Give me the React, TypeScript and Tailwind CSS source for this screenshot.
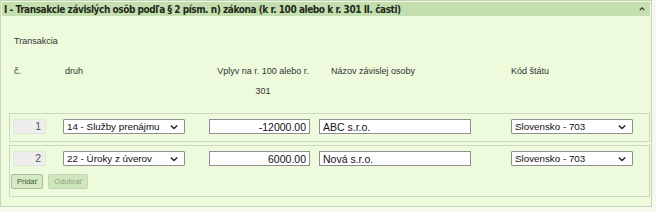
import { useState } from "react";

type Row = { id: number; druh: string; amount: string; name: string; country: string };

const druhOptions = ["14 - Služby prenájmu", "22 - Úroky z úverov"];
const countryOptions = ["Slovensko - 703"];

function Chevron() {
  return (
    <svg
      viewBox="0 0 10 6"
      className="pointer-events-none absolute right-[7px] top-1/2 h-[5px] w-[8px] -translate-y-1/2"
    >
      <path d="M1 1l4 4 4-4" fill="none" stroke="#222" strokeWidth="1.8" />
    </svg>
  );
}

function Select({ value, options, width }: { value: string; options: string[]; width: string }) {
  return (
    <div className={`relative text-[9.8px] leading-[13px] ${width}`}>
      <select
        defaultValue={value}
        className="block h-[15px] w-full appearance-none rounded-[1px] border border-[#8f8f8f] bg-white pl-[3px] leading-[13px] text-[#111] outline-none"
      >
        {options.map((o) => (
          <option key={o}>{o}</option>
        ))}
      </select>
      <Chevron />
    </div>
  );
}

function RowFields({ row }: { row: Row }) {
  return (
    <div className="flex h-[15px] items-center text-[10.5px] leading-[13px]">
      <div className="ml-[2px] flex h-[15px] w-[33px] items-center justify-end border border-[#e1e5dc] bg-[#eeeeee] pr-[4px] text-[#555]">
        {row.id}
      </div>
      <div className="ml-[17px]">
        <Select value={row.druh} options={druhOptions} width="w-[122px]" />
      </div>
      <input
        defaultValue={row.amount}
        className="ml-[24px] block h-[15px] w-[101px] border border-[#8f8f8f] bg-white pr-[3px] text-right text-[#111] outline-none"
      />
      <input
        defaultValue={row.name}
        className="ml-[9px] block h-[15px] w-[152px] border border-[#8f8f8f] bg-white pl-[3px] text-[#111] outline-none"
      />
      <div className="ml-[40px]">
        <Select value={row.country} options={countryOptions} width="w-[122px]" />
      </div>
    </div>
  );
}

export default function App() {
  const [rows] = useState<Row[]>([
    { id: 1, druh: "14 - Služby prenájmu", amount: "-12000.00", name: "ABC s.r.o.", country: "Slovensko - 703" },
    { id: 2, druh: "22 - Úroky z úverov", amount: "6000.00", name: "Nová s.r.o.", country: "Slovensko - 703" },
  ]);

  return (
    <div className="h-[212px] w-[656px] overflow-hidden bg-[#f4f8ef] font-['Liberation_Sans',Arial,sans-serif] text-[#333]">
      <div className="h-[207px] w-[652px] border border-[#c6d4ba] bg-[#edfadc] px-[1px] pt-[1px]">
        <div className="flex h-[14px] items-center justify-between bg-[#c4deb0] pl-[2px] pr-[5px]">
          <span className="font-['DejaVu_Sans_Condensed','DejaVu_Sans',sans-serif] text-[10px] font-bold tracking-[-0.45px] text-[#1f2a1a]">
            I - Transakcie závislých osôb podľa § 2 písm. n) zákona (k r. 100 alebo k r. 301 II. časti)
          </span>
          <svg viewBox="0 0 8 5" className="h-[4px] w-[6px]">
            <path d="M1 4l3-3 3 3" fill="none" stroke="#333" strokeWidth="1.6" />
          </svg>
        </div>

        <div className="mt-[19px] pl-[12px] text-[9px] leading-[12px]">Transakcia</div>

        <div className="mt-[14px] flex text-[9px] leading-[20px]">
          <div className="w-[63px] pl-[12px]">č.</div>
          <div className="w-[146px]">druh</div>
          <div className="w-[104px] text-center">
            Vplyv na r. 100 alebo r.
            <br />
            301
          </div>
          <div className="w-[196px] pl-[16px]">Názov závislej osoby</div>
          <div>Kód štátu</div>
        </div>

        <div className="ml-[7px] mt-[12px] flex w-[641px] flex-col gap-[3px]">
          {rows.map((row, i) => (
            <div key={row.id} className="border border-[#cbd9be] px-[1px] pb-[7px] pt-[5px]">
              <RowFields row={row} />
              {i === rows.length - 1 && (
                <div className="mt-[8px] flex gap-[5px]">
                  <button className="h-[15px] rounded-[2px] border border-[#a9bd99] bg-[#d5eac3] px-[5px] text-[7.5px] leading-[13px] text-[#3c5a35]">
                    Pridať
                  </button>
                  <button
                    disabled
                    className="h-[15px] rounded-[2px] border border-[#c3d8b2] bg-[#cfe5bc] px-[5px] text-[7.5px] leading-[13px] text-[#8aa383]"
                  >
                    Odobrať
                  </button>
                </div>
              )}
            </div>
          ))}
        </div>
      </div>
    </div>
  );
}
